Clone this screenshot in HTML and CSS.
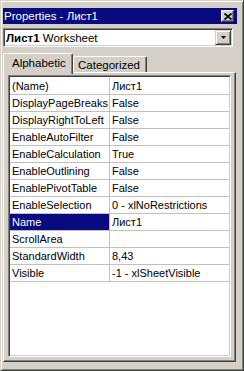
FILE: index.html
```html
<!DOCTYPE html>
<html>
<head>
<meta charset="utf-8">
<link rel="stylesheet" href="styles.css">
</head>
<body>
<div class="window">
  <div class="titlebar">
    <span class="title">Properties - Лист1</span>
    <span class="close"><svg width="8" height="7" viewBox="0 0 8 7"><path d="M0.5 0.5 L7.5 6.5 M7.5 0.5 L0.5 6.5" stroke="#000" stroke-width="1.7"/></svg></span>
  </div>
  <div class="combo">
    <span class="combo-text"><b>Лист1</b> Worksheet</span>
    <span class="dd"><svg width="5" height="3" viewBox="0 0 5 3"><path d="M0 0 H5 L2.5 3 Z" fill="#000"/></svg></span>
  </div>
  <div class="tabs">
    <div class="tab active">Alphabetic</div>
    <div class="tab inactive">Categorized</div>
  </div>
  <div class="panel">
    <div class="grid">
      <div class="row"><div class="name">(Name)</div><div class="value">Лист1</div></div>
      <div class="row"><div class="name">DisplayPageBreaks</div><div class="value">False</div></div>
      <div class="row"><div class="name">DisplayRightToLeft</div><div class="value">False</div></div>
      <div class="row"><div class="name">EnableAutoFilter</div><div class="value">False</div></div>
      <div class="row"><div class="name">EnableCalculation</div><div class="value">True</div></div>
      <div class="row"><div class="name">EnableOutlining</div><div class="value">False</div></div>
      <div class="row"><div class="name">EnablePivotTable</div><div class="value">False</div></div>
      <div class="row"><div class="name">EnableSelection</div><div class="value">0 - xlNoRestrictions</div></div>
      <div class="row sel"><div class="name">Name</div><div class="value">Лист1</div></div>
      <div class="row"><div class="name">ScrollArea</div><div class="value"></div></div>
      <div class="row"><div class="name">StandardWidth</div><div class="value">8,43</div></div>
      <div class="row"><div class="name">Visible</div><div class="value">-1 - xlSheetVisible</div></div>
    </div>
  </div>
</div>
</body>
</html>
```
FILE: styles.css
```css
* { box-sizing: border-box; }
html, body { margin: 0; padding: 0; }
body {
  width: 244px;
  height: 371px;
  overflow: hidden;
  font-family: "Liberation Sans", Arial, sans-serif;
  font-size: 11px;
  color: #000;
  background: #d4d0c8;
}
.window {
  width: 244px;
  height: 371px;
  display: flex;
  flex-direction: column;
  background: #d4d0c8;
  border: 1px solid;
  border-color: #d4d0c8 #404040 #404040 #d4d0c8;
  box-shadow: inset 1px 1px #fff, inset -1px -1px #808080;
  padding: 7px 6px 8px 2px;
}
.titlebar {
  height: 16px;
  flex: none;
  background: #0a0a80;
  color: #fff;
  font-size: 11.5px;
  display: flex;
  align-items: center;
  justify-content: space-between;
  padding: 0 3px 0 1px;
}
.title { white-space: nowrap; }
.close {
  width: 13px;
  height: 12px;
  background: #d4d0c8;
  border: 1px solid;
  border-color: #fff #404040 #404040 #fff;
  box-shadow: inset -1px -1px #808080;
  display: flex;
  align-items: center;
  justify-content: center;
}
.close svg { display: block; }
.combo {
  flex: none;
  margin-top: 4px;
  margin-right: 4px;
  height: 19px;
  background: #fff;
  border: 1px solid;
  border-color: #808080 #fff #fff #808080;
  box-shadow: inset 1px 1px #404040, inset -1px -1px #d4d0c8;
  display: flex;
  align-items: center;
  padding: 1px;
  font-size: 11.5px;
}
.combo-text { flex: 1; white-space: nowrap; padding-left: 1px; }
.combo-text b { font-weight: bold; }
.dd {
  width: 16px;
  height: 15px;
  background: #d4d0c8;
  border: 1px solid;
  border-color: #d4d0c8 #404040 #404040 #d4d0c8;
  box-shadow: inset 1px 1px #fff, inset -1px -1px #808080;
  display: flex;
  align-items: center;
  justify-content: center;
}
.dd svg { display: block; }
.tabs {
  flex: none;
  display: flex;
  align-items: flex-end;
  height: 19px;
  margin-top: 6px;
  font-size: 11.5px;
}
.tab {
  height: 16px;
  background: #d4d0c8;
  border: 1px solid;
  border-bottom: none;
  border-color: #fff #404040 transparent #fff;
  box-shadow: inset -1px 0 #808080;
  border-radius: 2px 2px 0 0;
  display: flex;
  align-items: center;
  white-space: nowrap;
}
.tab.active {
  width: 70px;
  height: 21px;
  margin-bottom: -2px;
  padding-left: 8px;
  padding-bottom: 2px;
  position: relative;
  z-index: 2;
}
.tab.inactive {
  width: 74px;
  padding-left: 4px;
}
.panel {
  flex: 1;
  display: flex;
  margin-right: 1px;
  border: 1px solid;
  border-color: #fff #404040 #404040 #fff;
  box-shadow: inset -1px -1px #808080;
  padding: 2px 4px 4px 4px;
}
.grid {
  flex: 1;
  background: #fff;
  border: 1px solid;
  border-color: #808080 #fff #fff #808080;
  box-shadow: inset 1px 1px #404040, inset -1px -1px #d4d0c8;
  padding: 2px 1px 1px 1px;
}
.row {
  display: flex;
  height: 17px;
  border-bottom: 1px solid #c0c0c0;
}
.name {
  width: 100px;
  flex: none;
  border-right: 1px solid #c0c0c0;
  padding-left: 2px;
  line-height: 16px;
  white-space: nowrap;
  overflow: hidden;
}
.value {
  flex: 1;
  padding-left: 2px;
  line-height: 16px;
  white-space: nowrap;
}
.row.sel .name {
  background: #0a0a80;
  color: #fff;
}
```
